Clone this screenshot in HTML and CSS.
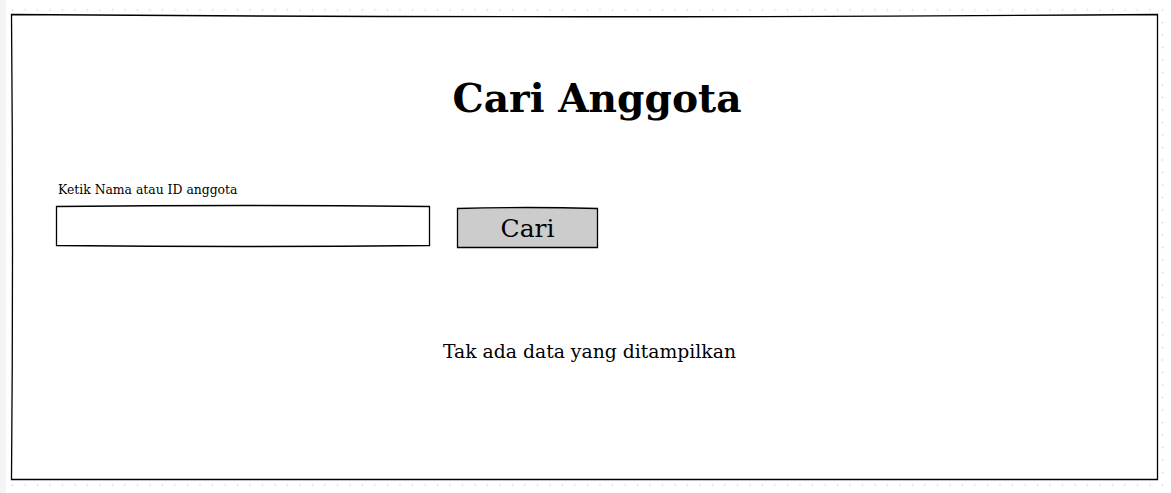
FILE: index.html
```html
<!DOCTYPE html>
<html lang="id">
<head>
<meta charset="utf-8">
<title>Cari Anggota</title>
<link rel="stylesheet" href="styles.css">
</head>
<body>
<main class="frame">
  <svg class="sketch" viewBox="0 0 1147 466" preserveAspectRatio="none" aria-hidden="true">
    <path d="M0.5,0.5 Q573,5 1146.5,0.5 L1146.5,465.5 L0.5,465.5 Q2.5,233 0.5,0.5 Z" fill="#fff" stroke="#000" stroke-width="1.3"/>
  </svg>
  <h1 class="title">Cari Anggota</h1>
  <form class="search">
    <label class="field">
      <span class="field-label">Ketik Nama atau ID anggota</span>
      <span class="input-wrap">
        <svg class="sketch" viewBox="0 0 374 40" preserveAspectRatio="none" aria-hidden="true">
          <path d="M0.5,0.5 Q187,-1.5 373.5,0.5 L373.5,39.5 Q187,41.5 0.5,39.5 Z" fill="#fff" stroke="#000" stroke-width="1.3"/>
        </svg>
        <input class="input" type="text">
      </span>
    </label>
    <button class="btn" type="button">
      <svg class="sketch" viewBox="0 0 141 40" preserveAspectRatio="none" aria-hidden="true">
        <path d="M0.5,0.5 Q70.5,-1.5 140.5,0.5 L140.5,39.5 L0.5,39.5 Z" fill="#cccccc" stroke="#000" stroke-width="1.3"/>
      </svg>
      <span class="btn-text">Cari</span>
    </button>
  </form>
  <p class="empty">Tak ada data yang ditampilkan</p>
</main>
</body>
</html>
```
FILE: styles.css
```css
html, body {
  margin: 0;
  padding: 0;
}

body {
  width: 1171px;
  height: 493px;
  overflow: hidden;
  font-family: "DejaVu Serif", "Liberation Serif", serif;
  color: #000;
  background-color: #fff;
  background-image:
    linear-gradient(to right, #f4f4f4 6px, transparent 6px),
    radial-gradient(circle, #e2e2e2 0.8px, transparent 1.2px);
  background-size: 100% 100%, 12.5px 12.5px;
  background-position: 0 0, -6.25px 3.75px;
  background-repeat: no-repeat, repeat;
  padding: 14px 0 0 11px;
  box-sizing: border-box;
}

.frame {
  position: relative;
  width: 1147px;
  height: 466px;
  box-sizing: border-box;
  padding-top: 62px;
}

.sketch {
  position: absolute;
  left: 0;
  top: 0;
  width: 100%;
  height: 100%;
  overflow: visible;
  z-index: 0;
}

.title {
  position: relative;
  margin: 0;
  padding-left: 25px;
  text-align: center;
  font-size: 39.2px;
  line-height: 44px;
  font-weight: bold;
}

.search {
  position: relative;
  display: flex;
  align-items: flex-start;
  gap: 27px;
  margin: 63px 0 0;
  padding-left: 45px;
}

.field {
  display: flex;
  flex-direction: column;
  gap: 9px;
}

.field-label {
  font-size: 12.4px;
  line-height: 14px;
  padding-left: 2px;
}

.input-wrap {
  position: relative;
  display: block;
  width: 374px;
  height: 40px;
}

.input {
  position: relative;
  z-index: 1;
  width: 100%;
  height: 100%;
  box-sizing: border-box;
  border: 0;
  background: transparent;
  padding: 0 8px;
  font: inherit;
  outline: none;
}

.btn {
  position: relative;
  margin-top: 25px;
  width: 141px;
  height: 40px;
  padding: 0;
  border: 0;
  background: transparent;
  font-family: inherit;
  color: #000;
  display: flex;
  align-items: center;
  justify-content: center;
}

.btn-text {
  position: relative;
  z-index: 1;
  font-size: 25px;
  line-height: 28px;
  padding-top: 2px;
}

.empty {
  position: relative;
  margin: 93px 0 0;
  padding-left: 10px;
  text-align: center;
  font-size: 18.8px;
  line-height: 21px;
}
```
